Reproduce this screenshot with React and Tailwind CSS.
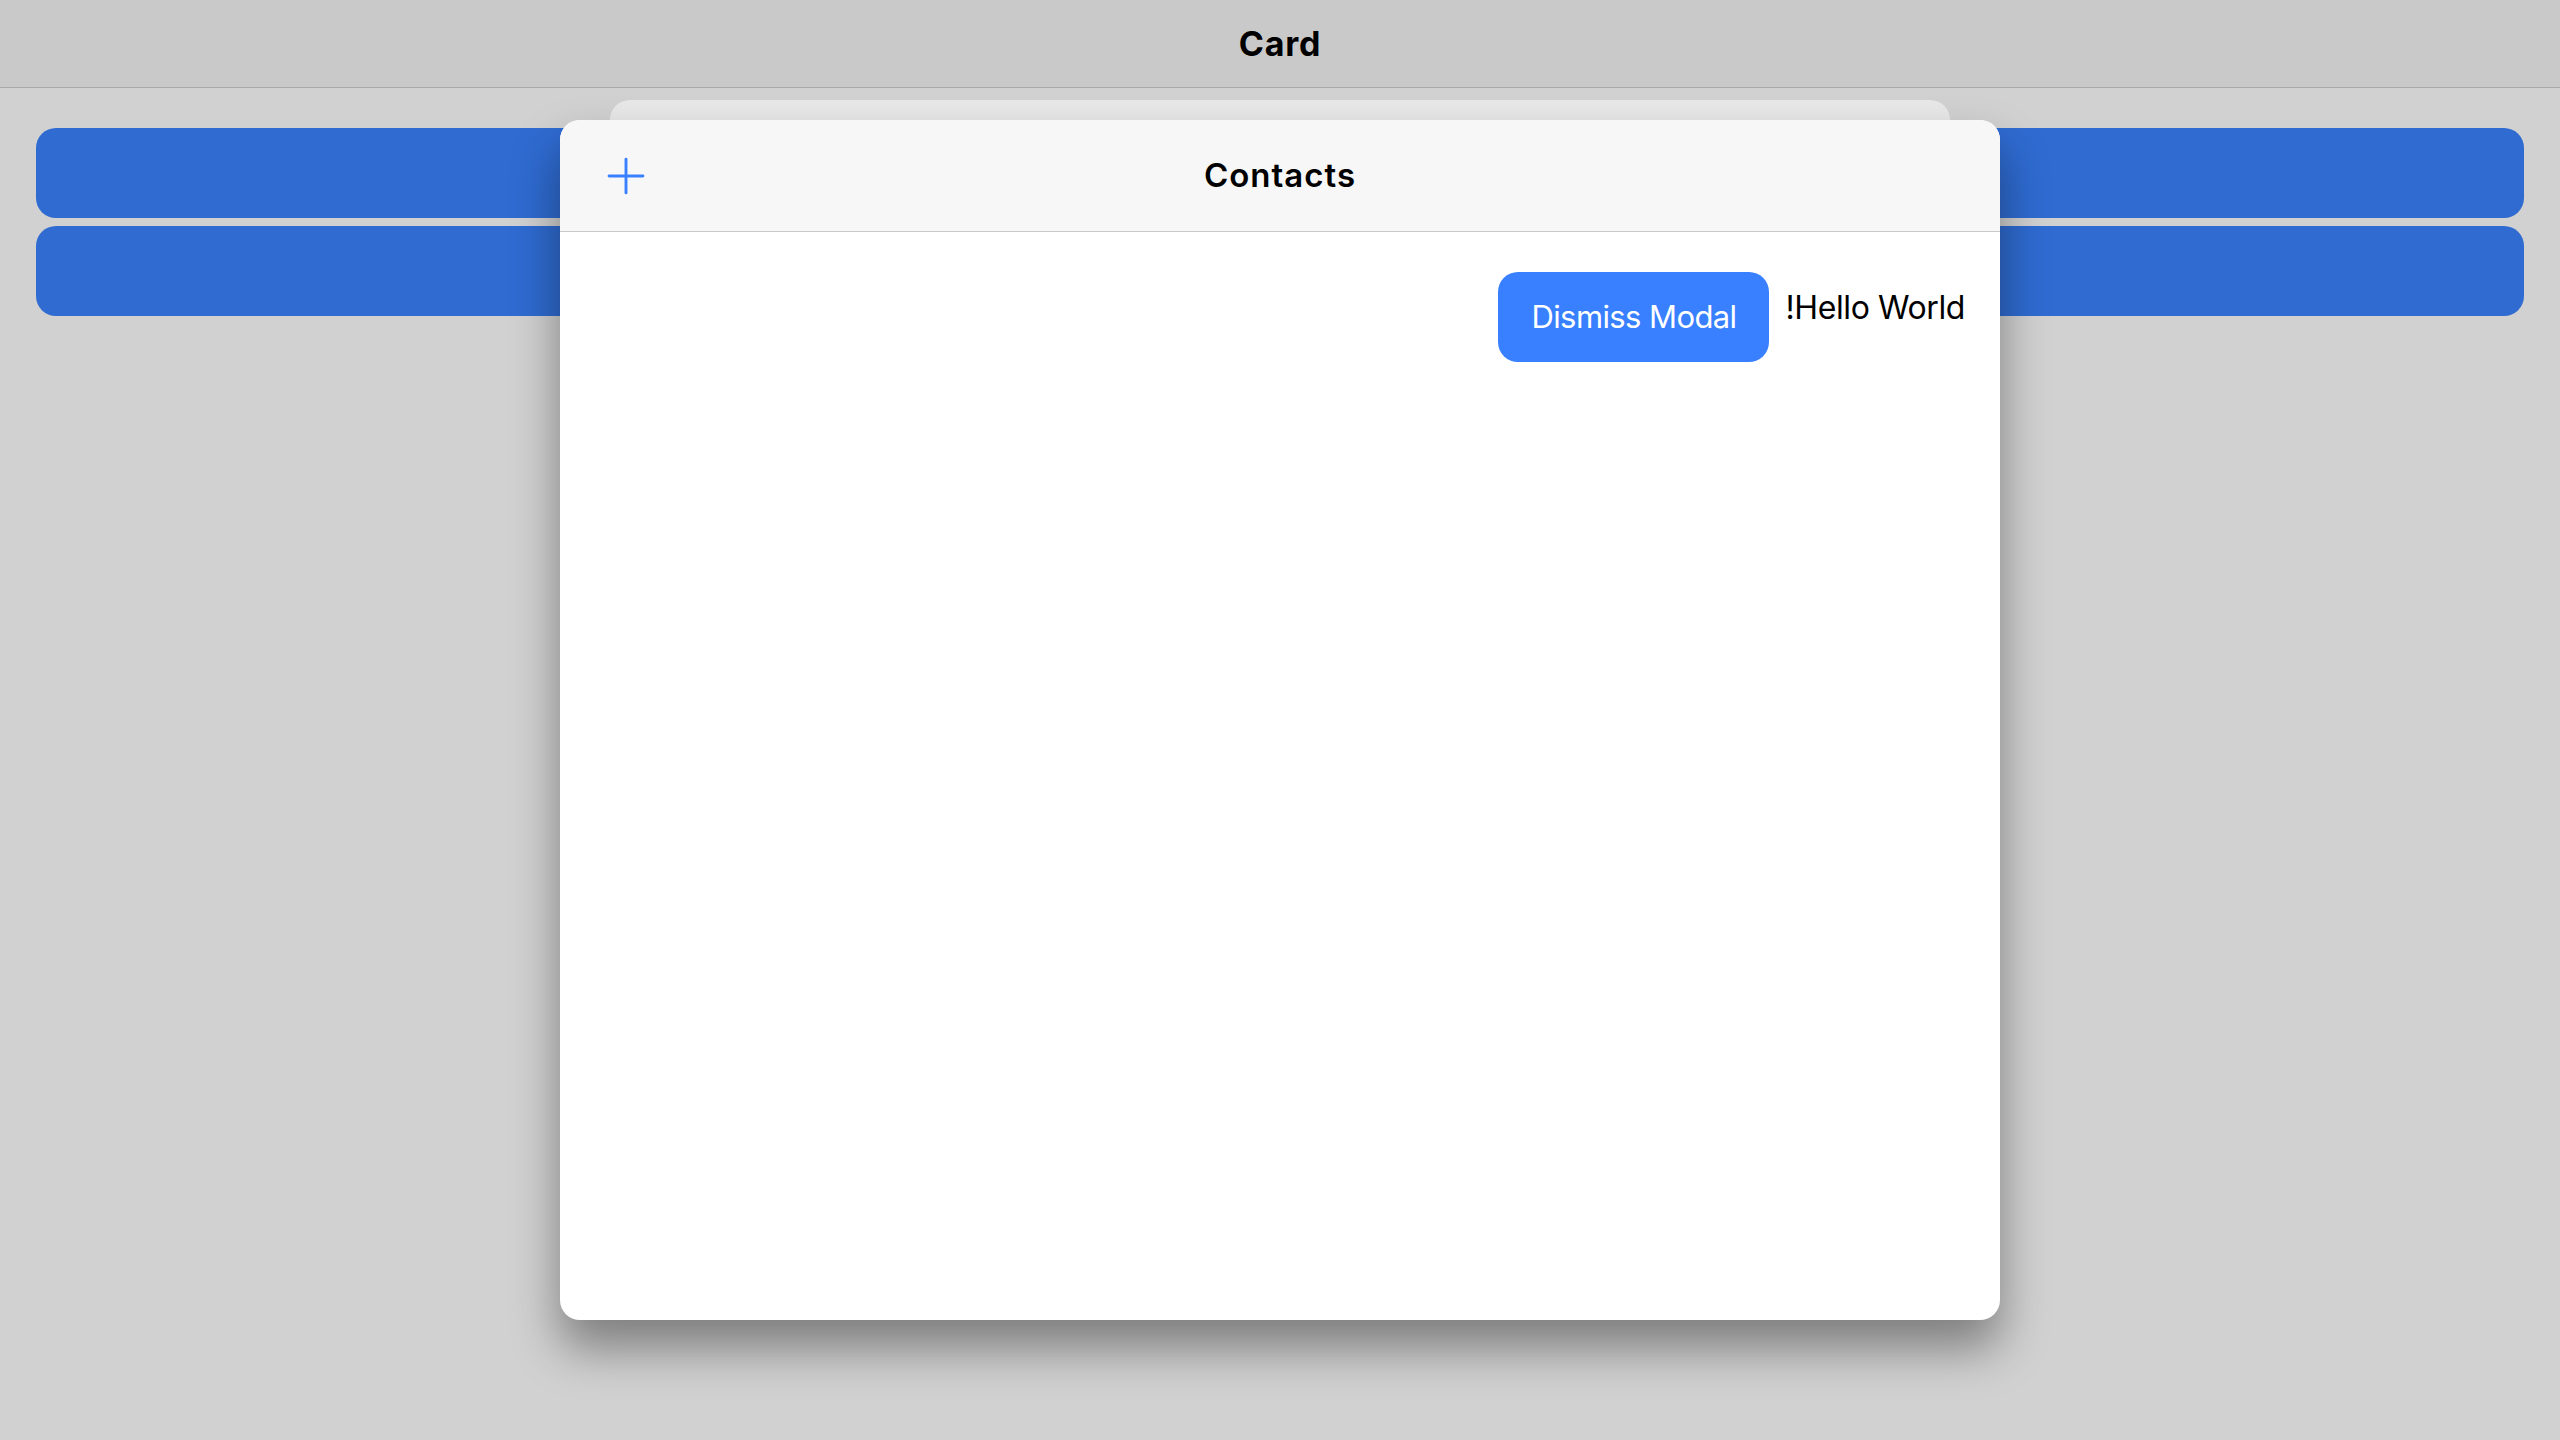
import { Plus } from "lucide-react";

const font = { fontFamily: "Inter, 'Noto Sans', sans-serif" };

const ContactsModal = () => {
  return (
    <div className="relative flex h-[1200px] w-[1440px] flex-col overflow-hidden rounded-[20px] bg-white shadow-[0_28px_48px_rgba(0,0,0,0.4)]">
      {/* Toolbar */}
      <div className="relative flex h-[112px] shrink-0 items-center justify-center border-b border-[#c8c8c8] bg-[#f7f7f7]">
        <button className="absolute left-[37px] top-1/2 flex h-[58px] w-[58px] -translate-y-1/2 items-center justify-center text-[#3880ff]">
          <Plus size={58} strokeWidth={1.2} />
        </button>
        <h2 className="text-[33px] font-semibold tracking-[1px] text-black">Contacts</h2>
      </div>

      {/* Content */}
      <div className="flex items-start justify-end gap-[16px] pr-[35px] pt-[40px]">
        <button className="flex h-[90px] items-center rounded-[20px] bg-[#3880ff] px-[33px] text-[31px] tracking-[-0.6px] text-white">
          Dismiss Modal
        </button>
        <span className="mt-[17px] text-[32px] leading-[38px] tracking-[-0.4px] text-black">!Hello World</span>
      </div>
    </div>
  );
};

export default function App() {
  return (
    <div className="relative h-[1440px] w-full overflow-hidden bg-[#d1d1d1]" style={font}>
      {/* Page header */}
      <header className="flex h-[88px] items-center justify-center border-b border-[#a9a9a9] bg-[#c9c9c9]">
        <h1 className="text-[34px] font-bold tracking-[0.8px] text-black">Card</h1>
      </header>

      {/* Page content */}
      <div className="flex flex-col gap-[8px] px-[36px] pt-[40px]">
        <div className="h-[90px] rounded-[20px] bg-[#2f6bd1]" />
        <div className="h-[90px] rounded-[20px] bg-[#2f6bd1]" />
      </div>

      {/* Stacked card modal */}
      <div className="absolute inset-0 flex items-center justify-center">
        <div className="absolute left-[610px] right-[610px] top-[100px] h-[300px] rounded-t-[20px] bg-[#e8e8e8]" />
        <ContactsModal />
      </div>
    </div>
  );
}
